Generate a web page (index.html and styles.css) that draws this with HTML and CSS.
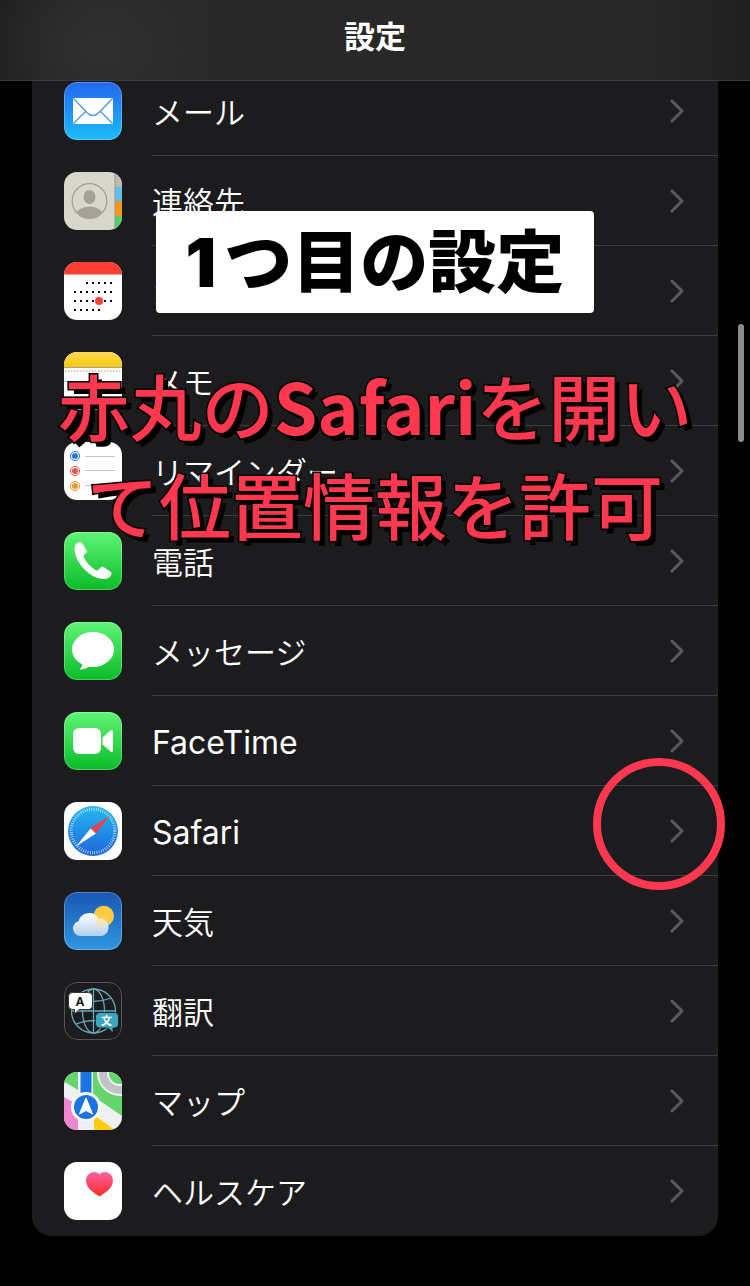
FILE: index.html
```html
<!DOCTYPE html>
<html lang="ja">
<head>
<meta charset="utf-8">
<meta name="viewport" content="width=device-width, initial-scale=1">
<title>設定</title>
<link rel="stylesheet" href="styles.css">
</head>
<body>
<header class="navbar"><h1 class="navbar-title">設定</h1></header>
<main class="screen">
<ul class="list">
<li><a class="row" href="#mail">
<svg class="icon" viewBox="0 0 58 58" aria-hidden="true"><defs><linearGradient id="gm" x2="0" y2="1"><stop stop-color="#2467ee"/><stop offset="1" stop-color="#1dbcfa"/></linearGradient></defs><rect width="58" height="58" fill="url(#gm)"/><rect class="edge" x=".5" y=".5" width="57" height="57" rx="12.500"/><rect x="9" y="16" width="40" height="26" rx="1" fill="#fff"/><path d="M9.500 16.500L22 29.500Q29 37.500 36 29.500L48.500 16.500M9.500 41.500L21.500 29.500M48.500 41.500L36.500 29.500" fill="none" stroke="#4b9be0" stroke-width="1.400"/></svg>
<span class="label"><span class="name">メール</span><svg class="chevron" viewBox="0 0 14 24" aria-hidden="true"><path d="M2 2L12 12L2 22"/></svg></span></a></li>
<li><a class="row" href="#contacts">
<svg class="icon" viewBox="0 0 58 58" aria-hidden="true"><defs><clipPath id="cc"><circle cx="25.500" cy="29" r="17"/></clipPath></defs><rect width="58" height="58" fill="#d8d7cb"/><path d="M51 0h7v15h-7z" fill="#bdbab2"/><path d="M51 15h7v14h-7z" fill="#61bfec"/><path d="M51 29h7v15h-7z" fill="#f5971c"/><path d="M51 44h7v14h-7z" fill="#52d067"/><path d="M51 0v58" stroke="#9a978f"/><g fill="#a6a196"><ellipse cx="25.500" cy="25" rx="6" ry="7"/><ellipse cx="25.500" cy="43.500" rx="14" ry="9" clip-path="url(#cc)"/></g><circle cx="25.500" cy="29" r="17.300" fill="none" stroke="#a6a196" stroke-width="1.300"/></svg>
<span class="label"><span class="name">連絡先</span><svg class="chevron" viewBox="0 0 14 24" aria-hidden="true"><path d="M2 2L12 12L2 22"/></svg></span></a></li>
<li><a class="row" href="#calendar">
<svg class="icon" viewBox="0 0 58 58" aria-hidden="true"><rect width="58" height="58" fill="#fff"/><path d="M0 0h58v12.500H0z" fill="#fc3d31"/><g fill="none" stroke="#050505" stroke-width="2" stroke-dasharray="2 4"><path d="M22 21h26M10 30h38M10 39h38M10 48h26"/></g><circle cx="35" cy="39" r="4" fill="#fa4236"/></svg>
<span class="label"><span class="name">カレンダー</span><svg class="chevron" viewBox="0 0 14 24" aria-hidden="true"><path d="M2 2L12 12L2 22"/></svg></span></a></li>
<li><a class="row" href="#notes">
<svg class="icon" viewBox="0 0 58 58" aria-hidden="true"><defs><linearGradient id="gn" x2="0" y2="1"><stop stop-color="#fcd956"/><stop offset="1" stop-color="#fac90d"/></linearGradient></defs><rect width="58" height="58" fill="#fff"/><path d="M0 0h58v15H0z" fill="url(#gn)"/><path d="M0 15.500h58" stroke="#aaa590"/><path d="M1 19h56" stroke="#bbb" stroke-width="1.500" stroke-dasharray="1.500 1.500"/><path d="M0 29.500h58M0 44.500h58" stroke="#bbb"/></svg>
<span class="label"><span class="name">メモ</span><svg class="chevron" viewBox="0 0 14 24" aria-hidden="true"><path d="M2 2L12 12L2 22"/></svg></span></a></li>
<li><a class="row" href="#reminders">
<svg class="icon" viewBox="0 0 58 58" aria-hidden="true"><rect width="58" height="58" fill="#fff"/><g stroke-width="1"><circle cx="11" cy="14" r="4.600" fill="none" stroke="#237ddd"/><circle cx="11" cy="14" r="3" fill="#237ddd"/><circle cx="11" cy="29" r="4.600" fill="none" stroke="#e8534c"/><circle cx="11" cy="29" r="3" fill="#e8534c"/><circle cx="11" cy="44" r="4.600" fill="none" stroke="#eb9928"/><circle cx="11" cy="44" r="3" fill="#eb9928"/></g><path d="M21 14.500h30M21 28.500h30M21 43.500h30" stroke="#c4c4c6"/></svg>
<span class="label"><span class="name">リマインダー</span><svg class="chevron" viewBox="0 0 14 24" aria-hidden="true"><path d="M2 2L12 12L2 22"/></svg></span></a></li>
<li><a class="row" href="#phone">
<svg class="icon" viewBox="0 0 58 58" aria-hidden="true"><defs><linearGradient id="gg" x2="0" y2="1"><stop stop-color="#5ff476"/><stop offset="1" stop-color="#0abc28"/></linearGradient></defs><rect width="58" height="58" fill="url(#gg)"/><rect class="edge" x=".5" y=".5" width="57" height="57" rx="12.500"/><path d="M16 10C13 10 10.500 13 10.500 17C11 32 28 47.500 40 47C44 47 47 44.500 47.500 42C47.700 41 47 40 46 39.300L39.500 35C38.500 34.400 37.500 34.600 36.700 35.400L34 38C33 38.800 32 38.500 31 37.800C26 34.500 22 30 19.800 25C19.400 24 19.600 23.200 20.300 22.600L22.200 21C23 20.300 23 19.400 22.600 18.500L18.600 11.500C18 10.500 17 10 16 10Z" fill="#fff"/></svg>
<span class="label"><span class="name">電話</span><svg class="chevron" viewBox="0 0 14 24" aria-hidden="true"><path d="M2 2L12 12L2 22"/></svg></span></a></li>
<li><a class="row" href="#messages">
<svg class="icon" viewBox="0 0 58 58" aria-hidden="true"><rect width="58" height="58" fill="url(#gg)"/><rect class="edge" x=".5" y=".5" width="57" height="57" rx="12.500"/><ellipse cx="29" cy="27.500" rx="21" ry="17.500" fill="#fff"/><path d="M18 40C19 43 17.500 45.500 15.500 47.700C20 47.500 23.500 46 25.500 44Z" fill="#fff"/></svg>
<span class="label"><span class="name">メッセージ</span><svg class="chevron" viewBox="0 0 14 24" aria-hidden="true"><path d="M2 2L12 12L2 22"/></svg></span></a></li>
<li><a class="row" href="#facetime">
<svg class="icon" viewBox="0 0 58 58" aria-hidden="true"><rect width="58" height="58" fill="url(#gg)"/><rect class="edge" x=".5" y=".5" width="57" height="57" rx="12.500"/><rect x="9" y="16" width="28" height="26" rx="6" fill="#fff"/><path d="M38.500 25.500L46.500 18.500Q49 17 49 20V38Q49 41 46.500 39.500L38.500 32.500Z" fill="#fff"/></svg>
<span class="label"><span class="name name-latin">FaceTime</span><svg class="chevron" viewBox="0 0 14 24" aria-hidden="true"><path d="M2 2L12 12L2 22"/></svg></span></a></li>
<li class="marked"><a class="row" href="#safari">
<svg class="icon" viewBox="0 0 58 58" aria-hidden="true"><defs><linearGradient id="gs" x2="0" y2="1"><stop stop-color="#25b9ef"/><stop offset="1" stop-color="#2064dc"/></linearGradient></defs><rect width="58" height="58" fill="#fff"/><circle cx="29" cy="29" r="25" fill="url(#gs)"/><circle cx="29" cy="29" r="21.800" fill="none" stroke="#d4ecfb" stroke-width="3" stroke-dasharray=".7 1.583"/><path d="M46 13.500L31.800 31.500L26.500 26.500Z" fill="#e8434b"/><path d="M12 44.500L26.500 26.500L31.800 31.500Z" fill="#fff"/></svg>
<span class="label"><span class="name name-latin">Safari</span><svg class="chevron" viewBox="0 0 14 24" aria-hidden="true"><path d="M2 2L12 12L2 22"/></svg></span></a><span class="ring"></span></li>
<li><a class="row" href="#weather">
<svg class="icon" viewBox="0 0 58 58" aria-hidden="true"><defs><linearGradient id="gw" x2="0" y2="1"><stop stop-color="#1857b4"/><stop offset="1" stop-color="#3196e0"/></linearGradient><linearGradient id="gc" x2="0" y2="1"><stop stop-color="#fff"/><stop offset="1" stop-color="#b5d0ef"/></linearGradient><radialGradient id="gy"><stop stop-color="#fbe28c"/><stop offset="1" stop-color="#fbe28c" stop-opacity="0"/></radialGradient></defs><rect width="58" height="58" fill="url(#gw)"/><rect class="edge" x=".5" y=".5" width="57" height="57" rx="12.500"/><circle cx="39.700" cy="24" r="10.300" fill="#fccb3f"/><path d="M16 44A7.500 7.500 0 0 1 14.500 29.300A10.800 10.800 0 0 1 34.500 26.800A8.700 8.700 0 1 1 37.500 44Z" fill="url(#gc)"/><circle cx="37" cy="30" r="8" fill="url(#gy)" opacity=".75"/></svg>
<span class="label"><span class="name">天気</span><svg class="chevron" viewBox="0 0 14 24" aria-hidden="true"><path d="M2 2L12 12L2 22"/></svg></span></a></li>
<li><a class="row" href="#translate">
<svg class="icon" viewBox="0 0 58 58" aria-hidden="true"><rect width="58" height="58" fill="#1c1c1e"/><rect x=".5" y=".5" width="57" height="57" rx="12.500" fill="none" stroke="#555558"/><g fill="none" stroke="#66a9b8" stroke-width="1.300"><circle cx="29.500" cy="29" r="22"/><ellipse cx="29.500" cy="29" rx="11" ry="22"/><path d="M29.500 7v44M7.500 29h44M12 16Q29.500 23 47 16M12 42Q29.500 35 47 42"/></g><path d="M8.500 10.500h16a4 4 0 0 1 4 4v9a4 4 0 0 1-4 4H15L10.500 32V27.500H8.500a4 4 0 0 1-4-4v-9a4 4 0 0 1 4-4z" fill="#fff" stroke="#1c1c1e" stroke-width=".8"/><path d="M35.500 30.500h15a4 4 0 0 1 4 4v7.500a4 4 0 0 1-4 4H49V51L44 46h-8.500a4 4 0 0 1-4-4v-7.500a4 4 0 0 1 4-4z" fill="#3aa7bd" stroke="#1c1c1e" stroke-width=".8"/><text class="glyph-a" x="16" y="23.500">A</text><text class="glyph-b" x="42.500" y="42.500">文</text></svg>
<span class="label"><span class="name">翻訳</span><svg class="chevron" viewBox="0 0 14 24" aria-hidden="true"><path d="M2 2L12 12L2 22"/></svg></span></a></li>
<li><a class="row" href="#maps">
<svg class="icon" viewBox="0 0 58 58" aria-hidden="true"><rect width="58" height="58" fill="#f0f0f2"/><path d="M0 0H14V18L0 9.500Z" fill="#65d66b"/><path d="M29 0H58V44L29 24Z" fill="#65d66b"/><circle cx="56" cy="1" r="17" fill="none" stroke="#f0f0f2" stroke-width="12"/><circle cx="56" cy="1" r="17" fill="none" stroke="#c3c3c7" stroke-width="8"/><path d="M0 25L14 33V58H0Z" fill="#ee87cf"/><path d="M30 43L51 58H30Z" fill="#fccd0f"/><path d="M16.500 0h11v22h-11z" fill="#1c74e3"/><circle cx="22" cy="35" r="15" fill="#f5f7fa"/><circle cx="22" cy="35" r="12" fill="#1c74e3"/><path d="M22 26L28.500 42L22 38.500L15.500 42Z" fill="#fff" stroke="#fff" stroke-linejoin="round"/></svg>
<span class="label"><span class="name">マップ</span><svg class="chevron" viewBox="0 0 14 24" aria-hidden="true"><path d="M2 2L12 12L2 22"/></svg></span></a></li>
<li><a class="row" href="#health">
<svg class="icon" viewBox="0 0 58 58" aria-hidden="true"><defs><linearGradient id="gh" x2="0" y2="1"><stop stop-color="#fb61a8"/><stop offset="1" stop-color="#fc2d20"/></linearGradient></defs><rect width="58" height="58" fill="#fff"/><path d="M35.500 12.500C38 9.500 42 9.500 45 11.200C49 13.500 50 19 47.800 23.500C45.500 28 40.500 31.500 35.500 34.200C30.500 31.500 25.500 28 23.200 23.500C21 19 22 13.500 26 11.200C29 9.500 33 9.500 35.500 12.500Z" fill="url(#gh)"/></svg>
<span class="label"><span class="name">ヘルスケア</span><svg class="chevron" viewBox="0 0 14 24" aria-hidden="true"><path d="M2 2L12 12L2 22"/></svg></span></a></li>
</ul>
</main>
<div class="scrollbar"></div>
<div class="notes">
<p class="badge"><span class="numeral">1</span>つ目の設定</p>
<p class="caption">赤丸の<span class="latin">Safari</span>を開いて位置情報を許可</p>
</div>
</body>
</html>
```
FILE: styles.css
```css
* { box-sizing: border-box; }
body {
  margin: 0;
  background: #000;
  color: #fff;
  font-family: Inter, "Noto Sans CJK JP", sans-serif;
}
.navbar {
  position: relative;
  z-index: 1;
  display: flex;
  justify-content: center;
  height: 81px;
  padding-top: 15px;
  background:
    radial-gradient(ellipse 110px 90px at 13% 60%, #303032, transparent),
    linear-gradient(90deg, #202020, #292929 14%, #282828 86%, #202020);
  border-bottom: 1px solid #3a3a3c;
}
.navbar-title {
  margin: 0;
  font-size: 31px;
  line-height: 44px;
  font-weight: 700;
}
/* The list is scrolled slightly under the navigation bar. */
.screen { margin-top: -15px; padding: 0 32px 50px; }
.list {
  margin: 0;
  padding: 0;
  list-style: none;
  background: #1c1c1e;
  border-radius: 0 0 20px 20px;
}
.row {
  display: flex;
  align-items: center;
  gap: 30px;
  height: 90px;
  padding-left: 32px;
  color: inherit;
  text-decoration: none;
}
.icon {
  flex: none;
  width: 58px;
  height: 58px;
  border-radius: 13px;
}
.edge { fill: none; stroke: #fff; stroke-opacity: .25; }
.label {
  flex: 1;
  align-self: stretch;
  display: flex;
  align-items: center;
  justify-content: space-between;
  padding-right: 34px;
  border-bottom: 1px solid #3c3c3f;
}
li:last-child .label { border-bottom-color: transparent; }
.name { padding-top: 4px; font-size: 31px; line-height: 44px; font-weight: 350; }
.name-latin { font-size: 32px; font-weight: 400; }
.chevron { width: 14px; height: 24px; }
.chevron path {
  fill: none;
  stroke: #5b5b5f;
  stroke-width: 3;
  stroke-linecap: round;
  stroke-linejoin: round;
}
.glyph-a, .glyph-b { font-weight: 700; text-anchor: middle; }
.glyph-a { font-size: 12px; fill: #1c1c1e; }
.glyph-b { font-size: 11px; fill: #fff; }
.marked { position: relative; }
.ring {
  position: absolute;
  top: -28px;
  right: -7px;
  width: 132px;
  height: 132px;
  border: 8px solid #ff384f;
  border-radius: 50%;
  pointer-events: none;
}
.scrollbar {
  position: absolute;
  top: 324px;
  right: 6px;
  width: 6px;
  height: 118px;
  border-radius: 3px;
  background: #8b8b8d;
}
.notes {
  position: absolute;
  z-index: 2;
  top: 211px;
  left: 0;
  right: 0;
  display: flex;
  flex-direction: column;
  align-items: center;
  gap: 42px;
  pointer-events: none;
}
.badge {
  margin: 0;
  padding: 0 30px;
  border-radius: 4px;
  background: #fff;
  color: #000;
  font-size: 68px;
  line-height: 102px;
  font-weight: 900;
}
.numeral { padding-right: 8px; }
.caption {
  margin: 0;
  max-width: 670px;
  color: #ff384f;
  font-family: "Noto Sans CJK JP", sans-serif;
  font-size: 72px;
  line-height: 98px;
  font-weight: 500;
  text-align: center;
  -webkit-text-stroke: 3px #000;
  paint-order: stroke fill;
  text-shadow: 5px 5px 0 #000;
}
.latin { font-size: 70px; font-weight: 700; }
```
